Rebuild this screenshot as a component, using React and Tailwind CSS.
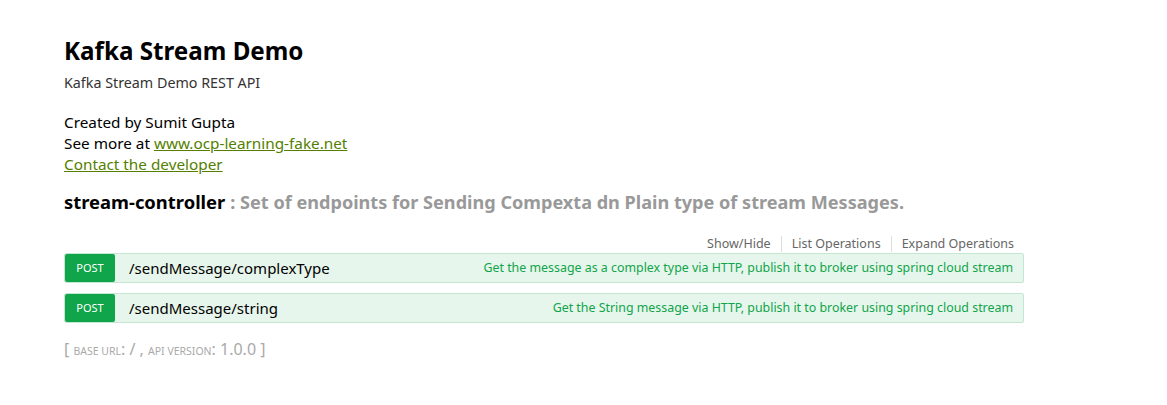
export default function App() {
  const ops = [
    { path: "/sendMessage/complexType", summary: "Get the message as a complex type via HTTP, publish it to broker using spring cloud stream" },
    { path: "/sendMessage/string", summary: "Get the String message via HTTP, publish it to broker using spring cloud stream" },
  ];
  return (
    <div className="min-h-[405px] bg-white" style={{ fontFamily: '"Noto Sans", "Open Sans", sans-serif' }}>
      <div className="ml-[64px] w-[960px] pt-[34px]">
        <div className="text-[24.2px] font-bold text-[#000] leading-[34px]">Kafka Stream Demo</div>
        <div className="mt-[5px] text-[14.3px] text-[#333] leading-[20px]">Kafka Stream Demo REST API</div>
        <div className="mt-[19px] text-[15.3px] text-[#000] leading-[21px]">
          <div>Created by Sumit Gupta</div>
          <div>
            See more at <a href="#" className="text-[#547f00] underline">www.ocp-learning-fake.net</a>
          </div>
          <div>
            <a href="#" className="text-[#547f00] underline">Contact the developer</a>
          </div>
        </div>
        <div className="mt-[15px] flex items-baseline font-bold leading-[24px]">
          <span className="text-[18.4px] text-[#000]">stream-controller</span>
          <span className="ml-[5px] text-[18.1px] text-[#999]">: Set of endpoints for Sending Compexta dn Plain type of stream Messages.</span>
        </div>
        <div className="mt-[22px] flex justify-end pr-[10px] text-[12.5px] text-[#666] leading-[16px]">
          <span className="pr-[10px] border-r border-[#ddd]">Show/Hide</span>
          <span className="px-[10px] border-r border-[#ddd]">List Operations</span>
          <span className="pl-[10px]">Expand Operations</span>
        </div>
        <div className="mt-[1px] flex flex-col gap-[10px]">
          {ops.map((o) => (
            <div key={o.path} className="flex h-[30px] items-center border border-[#c3e8d1] bg-[#e7f6ec] rounded-[2px]">
              <span className="flex h-[28px] w-[50px] items-center justify-center rounded-[2px] bg-[#10a54a] text-[11px] text-white uppercase">POST</span>
              <span className="ml-[14px] text-[15px] text-[#000]">{o.path}</span>
              <span className="ml-auto pr-[10px] text-[12.4px] text-[#10a54a]">{o.summary}</span>
            </div>
          ))}
        </div>
        <div className="mt-[16px] text-[#aaa] leading-[20px]">
          <span className="text-[16px]">[ </span>
          <span className="text-[10.5px] uppercase">base url</span>
          <span className="text-[16px]">: / , </span>
          <span className="text-[10.5px] uppercase">api version</span>
          <span className="text-[16px]">: 1.0.0 ]</span>
        </div>
      </div>
    </div>
  );
}
